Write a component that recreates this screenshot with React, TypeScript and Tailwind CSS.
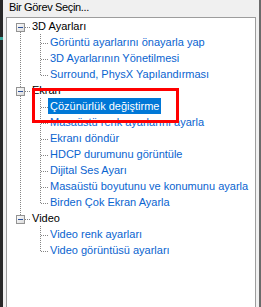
import React from "react";

type Row =
  | { kind: "root"; label: string; first: boolean; last: boolean }
  | { kind: "child"; label: string; rootCont: boolean; lastChild: boolean; selected?: boolean };

const groups: { label: string; items: string[] }[] = [
  { label: "3D Ayarları", items: ["Görüntü ayarlarını önayarla yap", "3D Ayarlarının Yönetilmesi", "Surround, PhysX Yapılandırması"] },
  {
    label: "Ekran",
    items: [
      "Çözünürlük değiştirme",
      "Masaüstü renk ayarlarını ayarla",
      "Ekranı döndür",
      "HDCP durumunu görüntüle",
      "Dijital Ses Ayarı",
      "Masaüstü boyutunu ve konumunu ayarla",
      "Birden Çok Ekran Ayarla",
    ],
  },
  { label: "Video", items: ["Video renk ayarları", "Video görüntüsü ayarları"] },
];

const rows: Row[] = [];
groups.forEach((g, gi) => {
  const lastGroup = gi === groups.length - 1;
  rows.push({ kind: "root", label: g.label, first: gi === 0, last: lastGroup });
  g.items.forEach((it, ii) => {
    rows.push({
      kind: "child",
      label: it,
      rootCont: !lastGroup,
      lastChild: ii === g.items.length - 1,
      selected: it === "Çözünürlük değiştirme",
    });
  });
});

const DOT = "#858585";

function VDots({ x, y1, y2 }: { x: number; y1: number; y2: number }) {
  const out: React.ReactNode[] = [];
  for (let y = y1; y < y2; y++) {
    if (y % 2 === 0) out.push(<rect key={y} x={x} y={y} width={1} height={1} fill={DOT} />);
  }
  return <>{out}</>;
}
function HDots({ y, x1, x2 }: { y: number; x1: number; x2: number }) {
  const out: React.ReactNode[] = [];
  for (let x = x1; x < x2; x++) {
    if (x % 2 === 1) out.push(<rect key={x} x={x} y={y} width={1} height={1} fill={DOT} />);
  }
  return <>{out}</>;
}

function RootGutter({ first, last }: { first: boolean; last: boolean }) {
  return (
    <svg width={23} height={16} viewBox="7 0 23 16" className="shrink-0" shapeRendering="crispEdges">
      <defs>
        <linearGradient id="bx" x1="0" y1="0" x2="1" y2="1">
          <stop offset="0" stopColor="#ffffff" />
          <stop offset="1" stopColor="#d8d8d8" />
        </linearGradient>
      </defs>
      {!first && <VDots x={20} y1={0} y2={5} />}
      {!last && <VDots x={20} y1={14} y2={16} />}
      <rect x={16.5} y={5.5} width={8} height={8} fill="url(#bx)" stroke="#939393" strokeWidth={1} />
      <rect x={18} y={9} width={5} height={1} fill="#2a4f9a" />
      <HDots y={9} x1={25} x2={30} />
    </svg>
  );
}

function ChildGutter({ rootCont, lastChild }: { rootCont: boolean; lastChild: boolean }) {
  return (
    <svg width={41} height={16} viewBox="7 0 41 16" className="shrink-0" shapeRendering="crispEdges">
      {rootCont && <VDots x={20} y1={0} y2={16} />}
      <VDots x={40} y1={0} y2={lastChild ? 10 : 16} />
      <HDots y={9} x1={40} x2={48} />
    </svg>
  );
}

export default function App() {
  return (
    <div
      className="relative w-[261px] h-[307px] flex bg-[#f0f0f0] overflow-hidden text-[11px]"
      style={{ fontFamily: '"Liberation Sans", Arial, sans-serif' }}
    >
      <div className="w-[3px] shrink-0 bg-[#282828] flex flex-col pt-[37px]">
        <div className="h-[3px] bg-[#3aa89b]" />
      </div>
      <div className="flex-1 flex flex-col min-w-0">
        <div className="h-[17px] shrink-0 pl-[6px] leading-[14px] text-black tracking-[-0.35px]">Bir Görev Seçin...</div>
        <div className="flex-1 mx-[3px] bg-white border-l border-t border-r border-[#9d9d9d] flex flex-col">
          {rows.map((r, i) =>
            r.kind === "root" ? (
              <div key={i} className="flex h-4 items-start">
                <RootGutter first={r.first} last={r.last} />
                <span className="h-4 leading-4 px-[2px] text-black whitespace-nowrap">{r.label}</span>
              </div>
            ) : (
              <div key={i} className="flex h-4 items-start">
                <ChildGutter rootCont={r.rootCont} lastChild={r.lastChild} />
                <span
                  className={
                    r.selected
                      ? "h-4 leading-4 px-[2px] whitespace-nowrap bg-[#0078d7] text-white"
                      : "h-4 leading-4 px-[2px] whitespace-nowrap text-[#0a64d0]"
                  }
                >
                  {r.label}
                </span>
              </div>
            )
          )}
        </div>
      </div>
      <div className="w-[2px] shrink-0 bg-[#6b6b6b]" />
      <div className="absolute left-[32px] top-[88px] w-[147px] h-[35px] border-[3px] border-[#ff0000]" />
    </div>
  );
}
